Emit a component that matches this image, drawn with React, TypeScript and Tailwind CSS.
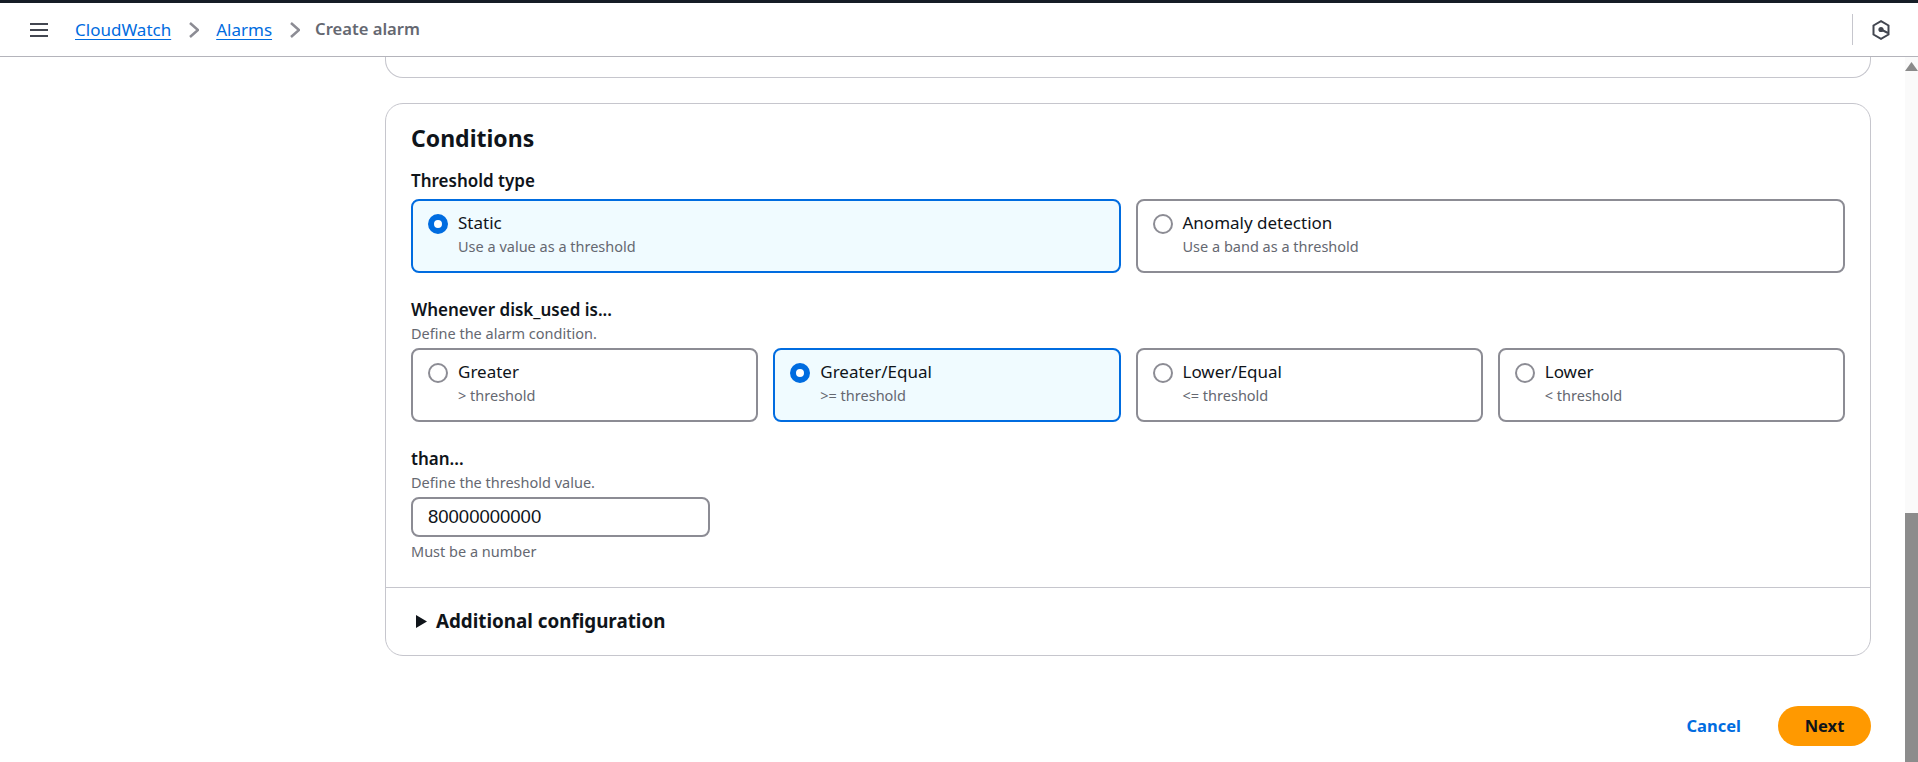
import React from "react";

const font = { fontFamily: '"Noto Sans", sans-serif' };

function ChevronRight() {
  return (
    <svg className="w-[10px] h-[16px] text-[#8c8c94]" fill="none" stroke="currentColor" viewBox="0 0 10 16">
      <path strokeWidth={2.5} d="M1 1l8 7-8 7" />
    </svg>
  );
}

interface RadioCardProps {
  label: string;
  description: string;
  selected?: boolean;
}

function RadioCard({ label, description, selected }: RadioCardProps) {
  return (
    <div
      className={`flex-1 min-w-0 h-[74px] rounded-[8px] border-2 pl-[15px] pt-[10px] flex gap-[10px] ${
        selected ? "border-[#006ce0] bg-[#f0fbff]" : "border-[#8c8c94] bg-white"
      }`}
    >
      {selected ? (
        <div className="mt-[3px] w-[20px] h-[20px] shrink-0 rounded-full border-[6px] border-[#006ce0] bg-white" />
      ) : (
        <div className="mt-[3px] w-[20px] h-[20px] shrink-0 rounded-full border-2 border-[#8c8c94] bg-white" />
      )}
      <div>
        <div className="text-[17px] leading-[24px] text-[#0f141a]">{label}</div>
        <div className="text-[14.5px] leading-[20px] text-[#656871] mt-[1px]">{description}</div>
      </div>
    </div>
  );
}

export default function App() {
  return (
    <div className="h-[762px] w-[1918px] overflow-hidden bg-white flex flex-col" style={font}>
      {/* Top bar */}
      <div className="h-[3px] bg-[#161d26]" />
      <div className="h-[54px] flex items-center border-b border-[#b4b4bb] pl-[30px] pr-[28px]">
        <svg className="w-[18px] h-[16px] text-[#424650]" fill="none" stroke="currentColor" viewBox="0 0 18 16">
          <path strokeWidth={2} d="M0 2h18M0 8h18M0 14h18" />
        </svg>
        <a className="ml-[27px] text-[17px] text-[#006ce0] underline underline-offset-[3px]">CloudWatch</a>
        <div className="ml-[18px] mr-[17px]"><ChevronRight /></div>
        <a className="text-[17px] text-[#006ce0] underline underline-offset-[3px]">Alarms</a>
        <div className="ml-[18px] mr-[15px]"><ChevronRight /></div>
        <span className="text-[16.6px] font-semibold text-[#656871]">Create alarm</span>
        <div className="ml-auto h-[31px] border-l border-[#c6c6cd] mr-[19px]" />
        <svg className="w-[18px] h-[20px] text-[#424650]" fill="none" stroke="currentColor" viewBox="0 0 18 20">
          <path strokeWidth={2} d="M9 1.2l7.5 4.3v9L9 18.8l-7.5-4.3v-9z" />
          <circle cx="9" cy="9.5" r="2.6" fill="currentColor" stroke="none" />
          <path strokeWidth={2} d="M9 9.5l7 3.5" />
        </svg>
      </div>

      <div className="flex-1 flex min-h-0">
        {/* Page content */}
        <div className="flex-1 pl-[385px] pr-[34px]">
          <div className="h-[21px] border-x border-b border-[#c6c6cd] rounded-b-[18px]" />

          <div className="mt-[25px] border border-[#c6c6cd] rounded-[18px] h-[553px] flex flex-col">
            <div className="px-[25px] pt-[19px] h-[484px] border-b border-[#c6c6cd]">
              <h2 className="text-[23px] leading-[30px] font-bold text-[#0f141a]">Conditions</h2>
              <div className="mt-[17px] text-[17px] leading-[22px] font-semibold text-[#0f141a]">Threshold type</div>
              <div className="mt-[7px] flex gap-[15px]">
                <RadioCard label="Static" description="Use a value as a threshold" selected />
                <RadioCard label="Anomaly detection" description="Use a band as a threshold" />
              </div>

              <div className="mt-[26px] text-[17px] leading-[22px] font-semibold text-[#0f141a]">Whenever disk_used is...</div>
              <div className="mt-[2px] text-[14.5px] leading-[20px] text-[#656871]">Define the alarm condition.</div>
              <div className="mt-[5px] flex gap-[15px]">
                <RadioCard label="Greater" description="> threshold" />
                <RadioCard label="Greater/Equal" description=">= threshold" selected />
                <RadioCard label="Lower/Equal" description="<= threshold" />
                <RadioCard label="Lower" description="< threshold" />
              </div>

              <div className="mt-[26px] text-[17px] leading-[22px] font-semibold text-[#0f141a]">than...</div>
              <div className="mt-[2px] text-[14.5px] leading-[20px] text-[#656871]">Define the threshold value.</div>
              <input
                readOnly
                value="80000000000"
                className="mt-[5px] block w-[299px] h-[40px] rounded-[8px] border-2 border-[#8c8c94] px-[15px] text-[18.5px] text-[#0f141a] outline-none"
                style={{ fontFamily: '"Liberation Sans", sans-serif' }}
              />
              <div className="mt-[4px] text-[14.5px] leading-[20px] text-[#656871]">Must be a number</div>
            </div>
            <div className="flex-1 flex items-center pl-[30px]">
              <svg className="w-[11px] h-[13px] text-[#0f141a]" fill="currentColor" viewBox="0 0 11 13">
                <path d="M0 0l11 6.5-11 6.5z" />
              </svg>
              <span className="ml-[9px] text-[18.8px] font-bold text-[#0f141a]">Additional configuration</span>
            </div>
          </div>

          <div className="mt-[50px] flex items-center justify-end">
            <a className="text-[16.5px] font-bold text-[#006ce0]">Cancel</a>
            <button className="ml-[37px] w-[93px] h-[40px] rounded-full bg-[#ff9900] text-[16.5px] font-bold text-[#0f141a]">Next</button>
          </div>
        </div>

        {/* Scrollbar */}
        <div className="w-[13px] flex flex-col items-center bg-[#fafafa]">
          <svg className="mt-[5px] w-[13px] h-[9px] text-[#8a8a8a]" fill="currentColor" viewBox="0 0 13 9">
            <path d="M6.5 0l6.5 9H0z" />
          </svg>
          <div className="mt-auto w-full h-[249px] bg-[#8c8c8c]" />
        </div>
      </div>
    </div>
  );
}
